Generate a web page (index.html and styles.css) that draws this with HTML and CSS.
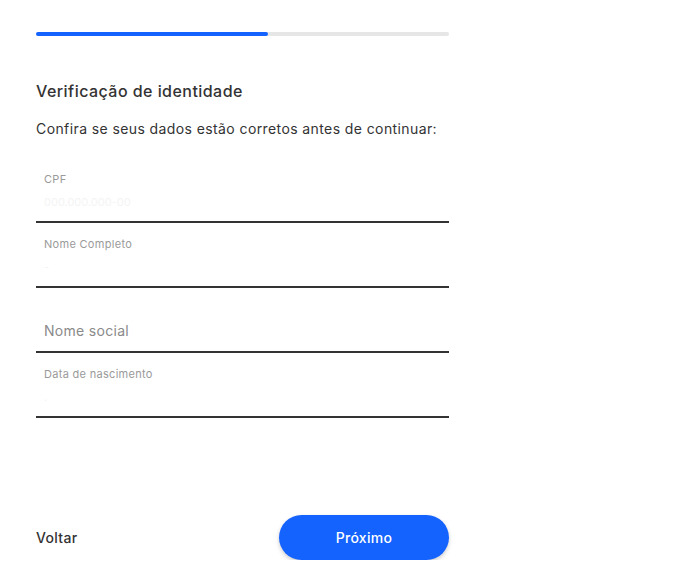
FILE: index.html
```html
<!DOCTYPE html>
<html lang="pt-BR">
<head>
    <meta charset="UTF-8">
    <title>Verificação de identidade</title>
    <link rel="stylesheet" href="styles.css">
</head>
<body>
    <div class="wizard">
        <!-- Progress -->
        <div class="progress">
            <div class="progress-fill"></div>
        </div>

        <h2 class="step-title">Verificação de identidade</h2>
        <p class="step-text">Confira se seus dados estão corretos antes de continuar:</p>

        <!-- Fields -->
        <div class="fields">
            <label class="field">
                <span class="field-label">CPF</span>
                <span class="field-value">000.000.000-00</span>
            </label>
            <label class="field">
                <span class="field-label">Nome Completo</span>
                <span class="field-value">-</span>
            </label>
            <label class="field field-empty">
                <span class="field-placeholder">Nome social</span>
            </label>
            <label class="field">
                <span class="field-label">Data de nascimento</span>
                <span class="field-value">.</span>
            </label>
        </div>

        <!-- Actions -->
        <div class="actions">
            <button class="back-btn">Voltar</button>
            <button class="next-btn">Próximo</button>
        </div>
    </div>
</body>
</html>
```

FILE: styles.css
```css
body {
    margin: 0;
    padding: 0;
    background-color: #fff;
    font-family: Inter, 'Open Sans', sans-serif;
    color: #333;
}
/* Wizard */
.wizard {
    width: 413px;
    padding: 32px 0 0 36px;
}
.progress {
    height: 4px;
    border-radius: 2px;
    background-color: #e6e6e6;
}
.progress-fill {
    width: 232px;
    height: 100%;
    border-radius: 2px;
    background-color: #1463ff;
}
.step-title {
    margin: 44px 0 0;
    font-size: 16px;
    font-weight: 500;
    letter-spacing: 0.45px;
    line-height: 22px;
    color: #333;
}
.step-text {
    margin: 17px 0 0;
    font-size: 14px;
    letter-spacing: 0.4px;
    line-height: 20px;
    color: #333;
}
/* Fields */
.fields {
    margin-top: 19px;
}
.field {
    display: flex;
    flex-direction: column;
    height: 63px;
    padding-left: 8px;
    border-bottom: 2px solid #333;
    box-sizing: content-box;
}
.field-label {
    margin-top: 14px;
    font-size: 11px;
    letter-spacing: 0.3px;
    line-height: 14px;
    color: #9a9a9a;
}
.field-value {
    margin-top: 9px;
    font-size: 11px;
    line-height: 14px;
    color: #f4f4f4;
}
.field-placeholder {
    margin-top: 34px;
    font-size: 14px;
    letter-spacing: 0.3px;
    line-height: 18px;
    color: #8a8a8a;
}
/* Actions */
.actions {
    display: flex;
    justify-content: space-between;
    align-items: center;
    margin-top: 97px;
}
.back-btn {
    padding: 0;
    border: none;
    background: none;
    font-family: inherit;
    font-size: 14px;
    font-weight: 500;
    letter-spacing: 0.3px;
    color: #333;
    cursor: pointer;
}
.next-btn {
    width: 170px;
    height: 45px;
    border: none;
    border-radius: 23px;
    background-color: #1463ff;
    box-shadow: 0 2px 4px rgba(0, 0, 0, 0.2);
    font-family: inherit;
    font-size: 14px;
    font-weight: 500;
    letter-spacing: 0.3px;
    color: #fff;
    cursor: pointer;
}
```
